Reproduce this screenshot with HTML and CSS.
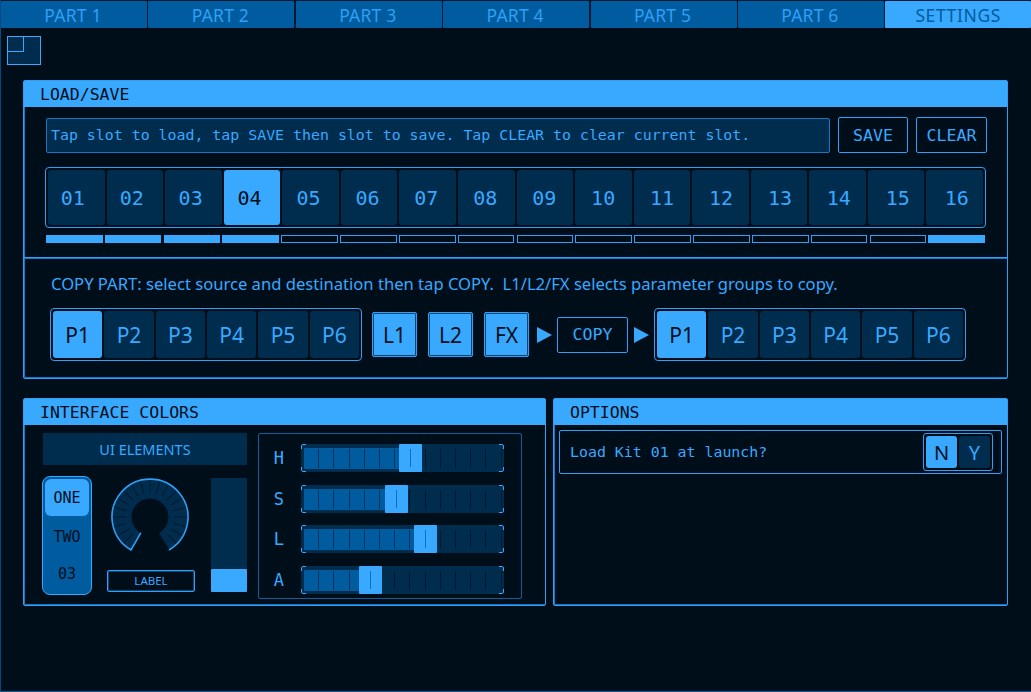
FILE: index.html
```html
<!DOCTYPE html>
<html lang="en">
  <head>
    <meta charset="UTF-8" />
    <title>Settings</title>
    <link rel="stylesheet" href="styles.css">
  </head>
  <body>
    <div class="app">
      <!-- top tabs -->
      <nav class="tabs">
        <div class="tab">PART 1</div>
        <div class="tab">PART 2</div>
        <div class="tab">PART 3</div>
        <div class="tab">PART 4</div>
        <div class="tab">PART 5</div>
        <div class="tab">PART 6</div>
        <div class="tab active">SETTINGS</div>
      </nav>

      <div class="resize-icon"><span></span></div>

      <!-- load / save -->
      <section class="panel load-panel">
        <h2 class="panel-title">LOAD/SAVE</h2>
        <div class="load-top">
          <div class="message">Tap slot to load, tap SAVE then slot to save. Tap CLEAR to clear current slot.</div>
          <button class="outline-btn save-btn">SAVE</button>
          <button class="outline-btn clear-btn">CLEAR</button>
        </div>
        <div class="slots">
          <div class="cell"><span style="--i: 0">01</span></div>
          <div class="cell"><span style="--i: 1">02</span></div>
          <div class="cell"><span style="--i: 2">03</span></div>
          <div class="cell on"><span style="--i: 3">04</span></div>
          <div class="cell"><span style="--i: 4">05</span></div>
          <div class="cell"><span style="--i: 5">06</span></div>
          <div class="cell"><span style="--i: 6">07</span></div>
          <div class="cell"><span style="--i: 7">08</span></div>
          <div class="cell"><span style="--i: 8">09</span></div>
          <div class="cell"><span style="--i: 9">10</span></div>
          <div class="cell"><span style="--i: 10">11</span></div>
          <div class="cell"><span style="--i: 11">12</span></div>
          <div class="cell"><span style="--i: 12">13</span></div>
          <div class="cell"><span style="--i: 13">14</span></div>
          <div class="cell"><span style="--i: 14">15</span></div>
          <div class="cell"><span style="--i: 15">16</span></div>
        </div>
        <div class="leds">
          <i class="led full"></i><i class="led full"></i><i class="led full"></i><i class="led full"></i>
          <i class="led"></i><i class="led"></i><i class="led"></i><i class="led"></i>
          <i class="led"></i><i class="led"></i><i class="led"></i><i class="led"></i>
          <i class="led"></i><i class="led"></i><i class="led"></i><i class="led full"></i>
        </div>
        <div class="copy-section">
          <p class="copy-text">COPY PART: select source and destination then tap COPY.&nbsp; L1/L2/FX selects parameter groups to copy.</p>
          <div class="copy-row">
            <div class="part-group">
              <div class="cell on">P1</div><div class="cell">P2</div><div class="cell">P3</div>
              <div class="cell">P4</div><div class="cell">P5</div><div class="cell">P6</div>
            </div>
            <div class="toggles">
              <div class="toggle">L1</div>
              <div class="toggle">L2</div>
              <div class="toggle">FX</div>
            </div>
            <div class="arrow"></div>
            <button class="outline-btn copy-btn">COPY</button>
            <div class="arrow"></div>
            <div class="part-group">
              <div class="cell on">P1</div><div class="cell">P2</div><div class="cell">P3</div>
              <div class="cell">P4</div><div class="cell">P5</div><div class="cell">P6</div>
            </div>
          </div>
        </div>
      </section>

      <div class="bottom-row">
        <!-- colors -->
        <section class="panel colors-panel">
          <h2 class="panel-title">INTERFACE COLORS</h2>
          <div class="colors-body">
            <div class="elements">
              <div class="elements-title">UI ELEMENTS</div>
              <div class="elements-row">
                <div class="radio">
                  <div class="radio-item on">ONE</div>
                  <div class="radio-item">TWO</div>
                  <div class="radio-item">03</div>
                </div>
                <div class="knob-wrap">
                  <svg class="knob" width="82" height="78" viewBox="-41 -41 82 78">
                    <path d="M-19 33A38 38 0 1 1 19 33L9.2 15.9A18.4 18.4 0 1 0 -9.2 15.9Z" fill="#002c4e"/>
                    <g stroke="#00192e" stroke-width="1">
                      <line x1="0" y1="-24" x2="0" y2="-37" transform="rotate(-150)"/>
                      <line x1="0" y1="-24" x2="0" y2="-37" transform="rotate(-135)"/>
                      <line x1="0" y1="-24" x2="0" y2="-37" transform="rotate(-120)"/>
                      <line x1="0" y1="-24" x2="0" y2="-37" transform="rotate(-105)"/>
                      <line x1="0" y1="-24" x2="0" y2="-37" transform="rotate(-90)"/>
                      <line x1="0" y1="-24" x2="0" y2="-37" transform="rotate(-75)"/>
                      <line x1="0" y1="-24" x2="0" y2="-37" transform="rotate(-60)"/>
                      <line x1="0" y1="-24" x2="0" y2="-37" transform="rotate(-45)"/>
                      <line x1="0" y1="-24" x2="0" y2="-37" transform="rotate(-30)"/>
                      <line x1="0" y1="-24" x2="0" y2="-37" transform="rotate(-15)"/>
                      <line x1="0" y1="-24" x2="0" y2="-37"/>
                      <line x1="0" y1="-24" x2="0" y2="-37" transform="rotate(15)"/>
                      <line x1="0" y1="-24" x2="0" y2="-37" transform="rotate(30)"/>
                      <line x1="0" y1="-24" x2="0" y2="-37" transform="rotate(45)"/>
                      <line x1="0" y1="-24" x2="0" y2="-37" transform="rotate(60)"/>
                      <line x1="0" y1="-24" x2="0" y2="-37" transform="rotate(75)"/>
                      <line x1="0" y1="-24" x2="0" y2="-37" transform="rotate(90)"/>
                      <line x1="0" y1="-24" x2="0" y2="-37" transform="rotate(105)"/>
                      <line x1="0" y1="-24" x2="0" y2="-37" transform="rotate(120)"/>
                      <line x1="0" y1="-24" x2="0" y2="-37" transform="rotate(135)"/>
                      <line x1="0" y1="-24" x2="0" y2="-37" transform="rotate(150)"/>
                    </g>
                    <path d="M-9.2 15.9L-19 33A38 38 0 1 1 19 33" fill="none" stroke="#2f9ff5" stroke-width="1.6"/>
                  </svg>
                  <div class="knob-label">LABEL</div>
                </div>
                <div class="vslider"><div class="vslider-fill"></div></div>
              </div>
            </div>
            <div class="sliders">
              <div class="slider-row">
                <span class="slider-name">H</span>
                <div class="track">
                  <div class="track-fill" style="width: 97px"></div>
                  <div class="thumb" style="left: 98px"></div>
                </div>
              </div>
              <div class="slider-row">
                <span class="slider-name">S</span>
                <div class="track">
                  <div class="track-fill" style="width: 83px"></div>
                  <div class="thumb" style="left: 84px"></div>
                </div>
              </div>
              <div class="slider-row">
                <span class="slider-name">L</span>
                <div class="track">
                  <div class="track-fill" style="width: 111px"></div>
                  <div class="thumb" style="left: 113px"></div>
                </div>
              </div>
              <div class="slider-row">
                <span class="slider-name">A</span>
                <div class="track">
                  <div class="track-fill" style="width: 56px"></div>
                  <div class="thumb" style="left: 58px"></div>
                </div>
              </div>
            </div>
          </div>
        </section>

        <!-- options -->
        <section class="panel options-panel">
          <h2 class="panel-title">OPTIONS</h2>
          <div class="option-row">
            <span class="option-text">Load Kit 01 at launch?</span>
            <div class="yes-no">
              <div class="cell on">N</div>
              <div class="cell">Y</div>
            </div>
          </div>
        </section>
      </div>
    </div>
  </body>
</html>
```

FILE: styles.css
```css
* {
  box-sizing: border-box;
}

html, body {
  margin: 0;
  height: 100%;
  background: #000e1a;
}

.app {
  width: 1031px;
  height: 692px;
  overflow: hidden;
  background: #000e1a;
  border-left: 1px solid #004a80;
  border-bottom: 1px solid #005c9e;
  color: #38a9ff;
  font-family: "Noto Sans", sans-serif;
}

/* tabs */
.tabs {
  display: grid;
  grid-template-columns: repeat(6, 146px) 1fr;
  column-gap: 1.4px;
  height: 28px;
  padding-top: 1px;
  background: #00192e;
}

.tab {
  display: flex;
  align-items: center;
  justify-content: center;
  padding-right: 2px;
  background: #005c9e;
  color: #2f9ff5;
  font-size: 17.5px;
  letter-spacing: 0.2px;
  border-radius: 1px;
}

.tab.active {
  background: #38a9ff;
  color: #005c9e;
  letter-spacing: 0.6px;
  padding-right: 0;
}

/* small square under tabs */
.resize-icon {
  width: 34px;
  height: 29px;
  margin: 8px 0 0 6px;
  background: #002c4e;
  border: 1px solid #38a9ff;
}

.resize-icon span {
  display: block;
  width: 16px;
  height: 15px;
  border-right: 1px solid #38a9ff;
  border-bottom: 1px solid #38a9ff;
}

/* panels */
.panel {
  border: 1px solid #2fa0f8;
  border-radius: 2px;
  box-shadow: inset 1px -1px 0 #1477c4;
}

.panel-title {
  margin: 0;
  height: 26px;
  padding-left: 16px;
  background: #38a9ff;
  color: #000e1a;
  font: normal 16.5px/27px "DejaVu Sans Mono", monospace;
}

.load-panel {
  width: 985px;
  height: 299px;
  margin: 15px 0 0 22px;
}

.load-top {
  display: flex;
  align-items: center;
  height: 36px;
  margin: 10px 0 0 22px;
}

.message {
  width: 784px;
  height: 35px;
  padding-left: 4px;
  background: #002c4e;
  border: 1px solid #1477c4;
  border-radius: 2px;
  font: 14.9px/32px "DejaVu Sans Mono", monospace;
  white-space: nowrap;
}

.outline-btn {
  height: 36px;
  padding: 0;
  background: #000e1a;
  color: #38a9ff;
  border: 1px solid #2fa0f8;
  border-radius: 2px;
  font: 16.6px "DejaVu Sans Mono", monospace;
}

.save-btn {
  width: 70px;
  margin-left: 8px;
}

.clear-btn {
  width: 71px;
  margin-left: 8px;
}

/* shared button cell */
.cell {
  display: flex;
  align-items: center;
  justify-content: center;
  background: #002c4e;
  border-radius: 3px;
}

.cell.on {
  background: #38a9ff;
  color: #000e1a;
}

.slots {
  display: grid;
  grid-template-columns: repeat(16, 1fr);
  column-gap: 2px;
  width: 941px;
  height: 61px;
  margin: 14px 0 0 21px;
  padding: 2px;
  border: 1px solid #2fa0f8;
  border-radius: 4px;
  font: 20px "DejaVu Sans Mono", monospace;
}

/* numbers run on a slightly wider pitch than the cells */
.slots span {
  transform: translateX(calc((var(--i) - 9.5) * 0.367px));
}

.leds {
  display: grid;
  grid-template-columns: repeat(16, 1fr);
  column-gap: 2.3px;
  width: 939px;
  height: 8px;
  margin: 7px 0 0 22px;
}

.led {
  border: 1px solid #2fa0f8;
}

.led.full {
  background: #38a9ff;
  border-color: #38a9ff;
}

.copy-section {
  margin-top: 14px;
  border-top: 1px solid #2fa0f8;
  box-shadow: inset 0 1px 0 #1477c4;
}

.copy-text {
  margin: 0;
  padding: 16px 0 0 27px;
  font-size: 16.6px;
  line-height: 20px;
  white-space: nowrap;
}

.copy-row {
  display: flex;
  align-items: center;
  height: 53px;
  margin: 14px 0 0 26px;
}

.part-group {
  display: grid;
  grid-template-columns: repeat(6, 1fr);
  column-gap: 2px;
  width: 312px;
  height: 53px;
  padding: 2px;
  border: 1px solid #2fa0f8;
  border-radius: 4px;
  font-size: 21px;
}

.toggles {
  display: flex;
  gap: 11px;
  margin-left: 10px;
}

.toggle {
  display: flex;
  align-items: center;
  justify-content: center;
  width: 45px;
  height: 45px;
  background: #38a9ff;
  color: #000e1a;
  border: 1px solid #2fa0f8;
  box-shadow: inset 0 0 0 1px #0a4777;
  border-radius: 2px;
  font-size: 21px;
}

.arrow {
  width: 0;
  height: 0;
  margin: 0 5px 0 8px;
  border-left: 15px solid #38a9ff;
  border-top: 8px solid transparent;
  border-bottom: 8px solid transparent;
}

.copy-btn {
  width: 71px;
}

.copy-btn + .arrow {
  margin: 0 5px 0 6px;
}

/* bottom */
.bottom-row {
  display: grid;
  grid-template-columns: 523px 455px;
  column-gap: 7px;
  height: 208px;
  margin: 19px 0 0 22px;
}

.colors-body {
  display: flex;
  padding: 8px 0 0 18px;
}

.elements {
  width: 205px;
}

.elements-title {
  height: 32px;
  margin-left: 1px;
  background: #002c4e;
  text-align: center;
  font-size: 14.5px;
  line-height: 32px;
}

.elements-row {
  display: flex;
  margin-top: 11px;
}

.radio {
  display: flex;
  flex-direction: column;
  width: 50px;
  height: 119px;
  padding: 2px;
  background: #005c9e;
  border: 1px solid #38a9ff;
  border-radius: 8px;
  color: #000e1a;
  font: 15px "DejaVu Sans Mono", monospace;
}

.radio-item {
  display: flex;
  flex: 1;
  align-items: center;
  justify-content: center;
  border-radius: 6px;
}

.radio-item.on {
  margin-bottom: 2px;
  background: #38a9ff;
}

.knob-wrap {
  display: flex;
  flex-direction: column;
  align-items: center;
  width: 88px;
  margin-left: 15px;
}

.knob {
  display: block;
  margin: 0 2px 0 0;
}

.knob-label {
  width: 88px;
  height: 22px;
  margin-top: 16px;
  border: 1px solid #2fa0f8;
  box-shadow: inset 0 0 0 1px #0a4777;
  border-radius: 2px;
  text-align: center;
  font-size: 11.5px;
  line-height: 20px;
}

.vslider {
  display: flex;
  align-items: flex-end;
  width: 36px;
  height: 114px;
  margin: 2px 0 0 16px;
  background: #002c4e;
  border-radius: 1px;
}

.vslider-fill {
  width: 100%;
  height: 23px;
  background: #38a9ff;
  border-radius: 1px;
}

.sliders {
  display: flex;
  flex-direction: column;
  width: 264px;
  height: 166px;
  margin-left: 11px;
  padding: 10px 17px 0 0;
  background: #000e1a;
  border: 1px solid #0f5f9f;
  border-radius: 2px;
}

.slider-row {
  display: flex;
  align-items: center;
  height: 28px;
  margin-bottom: 12.7px;
}

.slider-name {
  width: 42px;
  padding-right: 2px;
  text-align: center;
  font: 17px "DejaVu Sans Mono", monospace;
}

.track {
  position: relative;
  width: 204px;
  height: 28px;
  background-color: #002c4e;
  background-image: repeating-linear-gradient(90deg, transparent 0 14.2px, #00192e 14.2px 15.2px);
  background-size: 100% 19px;
  background-position: 3px 5px;
  background-repeat: no-repeat;
  border-radius: 2px;
}

/* corner brackets */
.track::after {
  content: "";
  position: absolute;
  inset: 0;
  border: 1px solid #38a9ff;
  border-radius: 2px;
  -webkit-mask:
    linear-gradient(#000 0 0) left top / 5px 5px no-repeat,
    linear-gradient(#000 0 0) right top / 5px 5px no-repeat,
    linear-gradient(#000 0 0) left bottom / 5px 5px no-repeat,
    linear-gradient(#000 0 0) right bottom / 5px 5px no-repeat;
  mask:
    linear-gradient(#000 0 0) left top / 5px 5px no-repeat,
    linear-gradient(#000 0 0) right top / 5px 5px no-repeat,
    linear-gradient(#000 0 0) left bottom / 5px 5px no-repeat,
    linear-gradient(#000 0 0) right bottom / 5px 5px no-repeat;
}

.track-fill {
  position: absolute;
  left: 3px;
  top: 4px;
  height: 21px;
  background-color: #005c9e;
  background-image: repeating-linear-gradient(90deg, transparent 0 14.2px, #00335a 14.2px 15.2px);
  background-size: 100% 19px;
  background-position: 0 1px;
  background-repeat: no-repeat;
  border-radius: 1px;
}

.thumb {
  position: absolute;
  top: 0;
  width: 23px;
  height: 28px;
  background: #38a9ff;
  border-radius: 1px;
}

.thumb::after {
  content: "";
  position: absolute;
  left: 11px;
  top: 5px;
  width: 1px;
  height: 18px;
  background: #0f6fbb;
}

.option-row {
  display: flex;
  align-items: center;
  justify-content: space-between;
  height: 44px;
  margin: 5px 5px 0 5px;
  padding: 0 8px 0 10px;
  border: 1px solid #2fa0f8;
  border-radius: 2px;
}

.option-text {
  font: 14.9px "DejaVu Sans Mono", monospace;
}

.yes-no {
  display: grid;
  grid-template-columns: 1fr 1fr;
  column-gap: 2px;
  width: 70px;
  height: 38px;
  padding: 2px;
  border: 1px solid #2fa0f8;
  border-radius: 3px;
  font: 20px "Noto Sans", sans-serif;
}
```
